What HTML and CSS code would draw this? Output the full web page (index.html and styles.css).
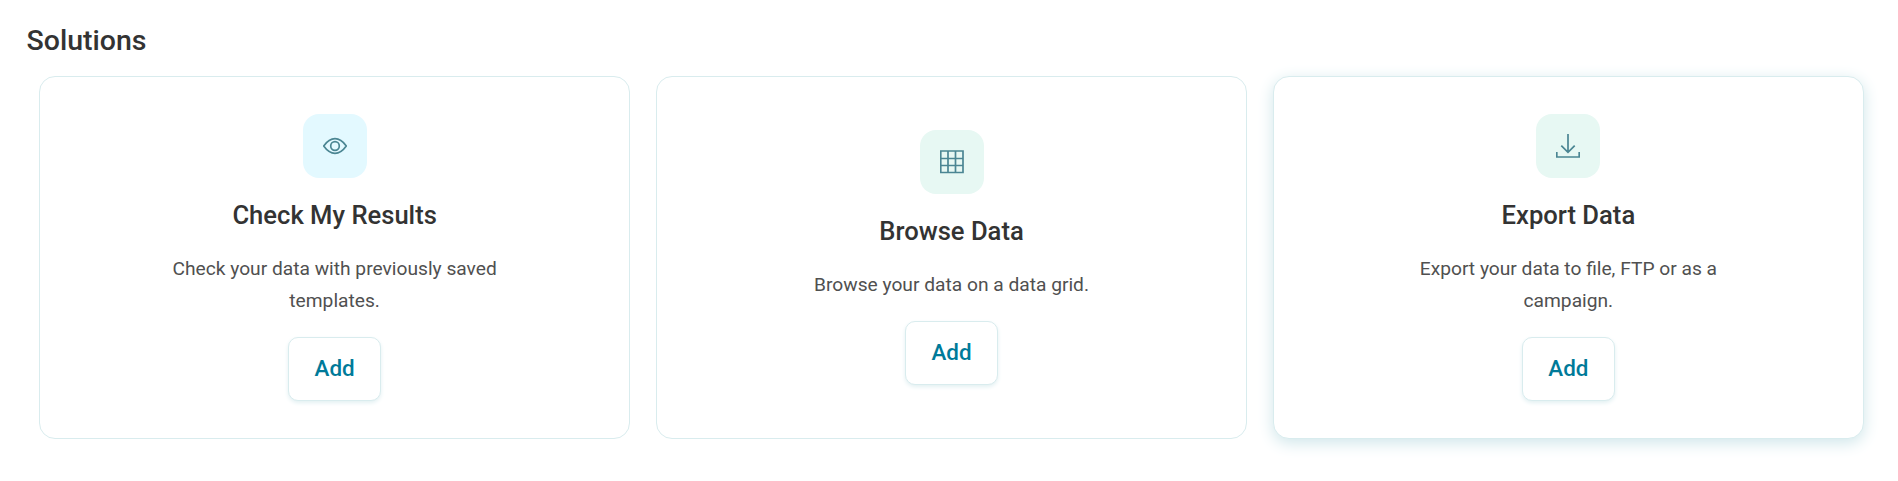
FILE: index.html
```html
<!DOCTYPE html>
<html lang="en">
<head>
<meta charset="utf-8">
<title>Solutions</title>
<link rel="stylesheet" href="styles.css">
</head>
<body>
<main class="page">
  <h1 class="page-title">Solutions</h1>
  <section class="cards">
    <article class="card">
      <div class="icon icon-blue">
        <svg width="24" height="24" viewBox="0 0 24 24"><path d="M.7 12C5 6 8.500 4.700 12 4.700S19 6 23.300 12C19 18 15.500 19.300 12 19.300S5 18 .7 12Z"/><circle cx="12" cy="12" r="4.300"/></svg>
      </div>
      <h2 class="card-title">Check My Results</h2>
      <p class="card-text">Check your data with previously saved templates.</p>
      <button class="add">Add</button>
    </article>
    <article class="card">
      <div class="icon icon-green">
        <svg width="24" height="24" viewBox="0 0 24 24"><path d="M.75 1H23V22.500H.75ZM8 1V22.500M15.500 1V22.500M.75 8.500H23M.75 15.500H23"/></svg>
      </div>
      <h2 class="card-title">Browse Data</h2>
      <p class="card-text">Browse your data on a data grid.</p>
      <button class="add">Add</button>
    </article>
    <article class="card card-active">
      <div class="icon icon-green">
        <svg width="24" height="24" viewBox="0 0 24 24"><path d="M12 0V18M5.300 11.600L12 18.300L18.700 11.600M.8 18V23H23.200V18"/></svg>
      </div>
      <h2 class="card-title">Export Data</h2>
      <p class="card-text">Export your data to file, FTP or as a campaign.</p>
      <button class="add">Add</button>
    </article>
  </section>
</main>
</body>
</html>
```
FILE: styles.css
```css
* {
  box-sizing: border-box;
}

body {
  margin: 0;
  background: #fff;
  color: #333;
  font-family: Roboto, sans-serif;
}

.page {
  min-height: 100vh;
  padding: 20px 34.200px 0 26.500px;
}

.page-title {
  margin: 0;
  font-size: 28.500px;
  font-weight: 500;
  line-height: 41px;
}

.cards {
  display: grid;
  grid-template-columns: repeat(3, 1fr);
  gap: 26px;
  margin: 15px 0 0 12.700px;
}

.card {
  display: flex;
  flex-direction: column;
  align-items: center;
  justify-content: center;
  height: 363px;
  border: 1px solid #d9ecee;
  border-radius: 16px;
  background: #fff;
}

.card-active {
  box-shadow: 0 4px 16px #cfe6ea;
}

.icon {
  display: flex;
  align-items: center;
  justify-content: center;
  width: 64px;
  height: 64px;
  border-radius: 16px;
}

.icon-blue {
  background: #e3f9ff;
}

.icon-green {
  background: #e7f8f3;
}

.icon svg {
  fill: none;
  stroke: #4b8693;
  stroke-width: 1.700;
}

.card-title {
  margin: 21px 0 0;
  font-size: 25.600px;
  font-weight: 500;
  line-height: 32px;
}

.card-text {
  width: 360px;
  margin: 22px 0 0;
  color: #505050;
  font-size: 19.200px;
  line-height: 32px;
  text-align: center;
}

.add {
  width: 93.400px;
  height: 64px;
  margin-top: 20px;
  padding: 0 0 2px;
  border: 1px solid #d9ecee;
  border-radius: 10px;
  background: #fff;
  box-shadow: 0 2px 4px #e2f0f2;
  color: #007a99;
  font: 500 22.400px/32px Roboto, sans-serif;
}
```
